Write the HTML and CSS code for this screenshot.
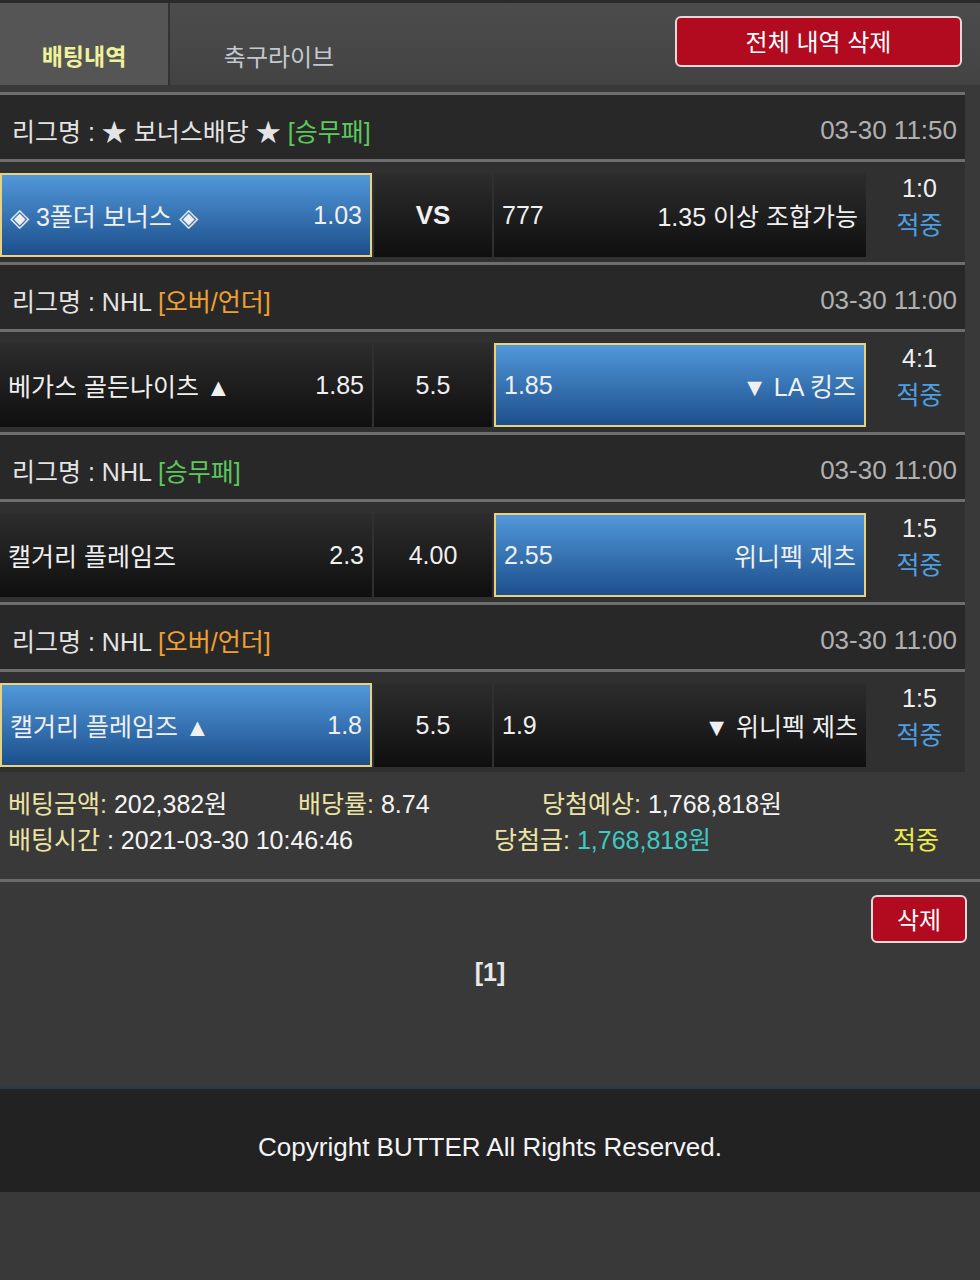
FILE: index.html
```html
<!doctype html>
<html>
	<head>
		<meta charset="utf-8">
		<title>배팅내역</title>
		<link rel="stylesheet" href="styles.css">
	</head>
	<body>
		<div class="topbar">
			<div class="tab active">배팅내역</div>
			<div class="tab">축구라이브</div>
			<div class="topbar-right">
				<button class="btn-red btn-all">전체 내역 삭제</button>
			</div>
		</div>

		<div class="bets">
			<div class="league">
				<span>리그명 : ★ 보너스배당 ★ <span class="tag green">[승무패]</span></span>
				<span class="time">03-30 11:50</span>
			</div>
			<div class="match">
				<div class="cell home selected"><span>◈ 3폴더 보너스 ◈</span><span>1.03</span></div>
				<div class="cell mid vs">VS</div>
				<div class="cell away"><span>777</span><span>1.35 이상 조합가능</span></div>
				<div class="result"><span>1:0</span><span class="hit">적중</span></div>
			</div>

			<div class="league">
				<span>리그명 : NHL <span class="tag orange">[오버/언더]</span></span>
				<span class="time">03-30 11:00</span>
			</div>
			<div class="match">
				<div class="cell home"><span>베가스 골든나이츠 ▲</span><span>1.85</span></div>
				<div class="cell mid">5.5</div>
				<div class="cell away selected"><span>1.85</span><span>▼ LA 킹즈</span></div>
				<div class="result"><span>4:1</span><span class="hit">적중</span></div>
			</div>

			<div class="league">
				<span>리그명 : NHL <span class="tag green">[승무패]</span></span>
				<span class="time">03-30 11:00</span>
			</div>
			<div class="match">
				<div class="cell home"><span>캘거리 플레임즈</span><span>2.3</span></div>
				<div class="cell mid">4.00</div>
				<div class="cell away selected"><span>2.55</span><span>위니펙 제츠</span></div>
				<div class="result"><span>1:5</span><span class="hit">적중</span></div>
			</div>

			<div class="league">
				<span>리그명 : NHL <span class="tag orange">[오버/언더]</span></span>
				<span class="time">03-30 11:00</span>
			</div>
			<div class="match">
				<div class="cell home selected"><span>캘거리 플레임즈 ▲</span><span>1.8</span></div>
				<div class="cell mid">5.5</div>
				<div class="cell away"><span>1.9</span><span>▼ 위니펙 제츠</span></div>
				<div class="result"><span>1:5</span><span class="hit">적중</span></div>
			</div>
		</div>

		<div class="summary">
			<div class="sum-row">
				<span class="c1"><span class="lbl">베팅금액:</span> 202,382원</span>
				<span class="c2"><span class="lbl">배당률:</span> 8.74</span>
				<span><span class="lbl">당첨예상:</span> 1,768,818원</span>
			</div>
			<div class="sum-row">
				<span class="c1w"><span class="lbl">배팅시간</span> : 2021-03-30 10:46:46</span>
				<span class="c2w"><span class="lbl">당첨금:</span> <span class="win">1,768,818원</span></span>
				<span class="status">적중</span>
			</div>
		</div>

		<div class="actions">
			<button class="btn-red btn-del">삭제</button>
		</div>

		<div class="pager">[1]</div>

		<div class="footer">Copyright BUTTER All Rights Reserved.</div>
	</body>
</html>
```

FILE: styles.css
```css
body {
	margin: 0;
	background: #393939;
	color: #e8e8e8;
	font-family: "Liberation Sans", Arial, "Noto Sans CJK KR", sans-serif;
	font-size: 25px;
}

button {
	font-family: inherit;
	cursor: pointer;
}

/* top tabs */

.topbar {
	display: flex;
	height: 82px;
	border-top: 3px solid #2a2a2a;
	background: linear-gradient(#4c4c4c, #434343);
	margin-bottom: 7px;
}

.tab {
	width: 218px;
	padding-top: 35px;
	box-sizing: border-box;
	text-align: center;
	color: #c4c8d0;
	font-size: 24px;
}

.tab.active {
	width: 170px;
	background: #555;
	border-right: 2px solid #333;
	color: #eef29c;
	font-weight: bold;
	font-size: 23px;
}

.topbar-right {
	flex: 1;
	display: flex;
	justify-content: flex-end;
	align-items: flex-start;
	padding: 13px 18px 0 0;
}

.btn-red {
	background: #b20a1f;
	color: #fff;
	border: 2px solid #e4dada;
	border-radius: 6px;
}

.btn-all {
	width: 287px;
	height: 51px;
	font-size: 24px;
	padding-bottom: 4px;
}

/* bet list */

.bets {
	width: 965px;
}

.league {
	display: flex;
	justify-content: space-between;
	align-items: center;
	box-sizing: border-box;
	height: 70px;
	padding: 6px 8px 0 12px;
	background: #282828;
	border-top: 3px solid #6e6e6e;
	border-bottom: 3px solid #6e6e6e;
	color: #e4e4e4;
}

.tag.green {
	color: #5cc85c;
}

.tag.orange {
	color: #f0a030;
}

.time {
	color: #b0b0b0;
	font-size: 26px;
}

.match {
	display: grid;
	grid-template-columns: 372px 118px 372px 97px;
	column-gap: 2px;
	height: 84px;
	padding: 11px 0 5px;
	background: #303030;
}

.cell {
	display: flex;
	justify-content: space-between;
	align-items: center;
	padding: 0 8px;
	background: linear-gradient(#2d2d2d, #0f0f0f);
	color: #f0f0f0;
}

.cell.mid {
	justify-content: center;
}

.cell.vs {
	font-weight: bold;
	font-size: 26px;
}

.cell.selected {
	background: linear-gradient(#5198da, #1d4f8c);
	border: 2px solid #e8d27f;
}

.result {
	display: flex;
	flex-direction: column;
	align-items: center;
	padding-left: 6px;
	margin-top: -3px;
	line-height: 37px;
	color: #f0f0f0;
}

.hit {
	color: #4d9fe4;
}

/* summary */

.summary {
	padding: 14px 8px 21px;
	border-bottom: 3px solid #6a6a6a;
}

.sum-row {
	display: flex;
	line-height: 36px;
	color: #f4f4f4;
}

.lbl {
	color: #ece4a4;
}

.c1 { width: 290px; }
.c2 { width: 244px; }
.c1w { width: 486px; }
.c2w { width: 399px; }

.win {
	color: #3ccac2;
}

.status {
	color: #ecec48;
}

.actions {
	display: flex;
	justify-content: flex-end;
	padding: 13px 13px 0 0;
}

.btn-del {
	width: 96px;
	height: 48px;
	font-size: 24px;
	padding-bottom: 3px;
}

.pager {
	text-align: center;
	font-weight: bold;
	padding-top: 15px;
	height: 129px;
}

.footer {
	display: flex;
	justify-content: center;
	align-items: center;
	box-sizing: border-box;
	height: 105px;
	padding-top: 14px;
	border-top: 2px solid #2b3a48;
	background: #222;
	color: #f4f4f4;
	font-size: 26px;
}
```
